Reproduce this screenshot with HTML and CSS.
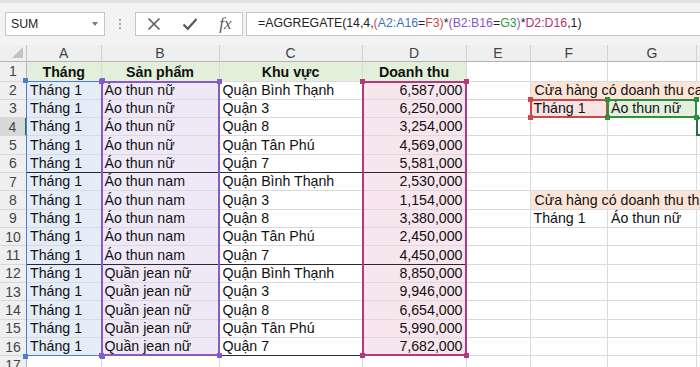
FILE: index.html
```html
<!DOCTYPE html>
<html lang="vi">
  <head>
    <meta charset="UTF-8" />
    <meta name="viewport" content="width=device-width, initial-scale=1.0" />
    <title>AGGREGATE</title>
    <link rel="stylesheet" href="styles.css">
  </head>
  <body>
    <div class="formula-bar">
      <div class="name-box">
        <span>SUM</span>
        <span class="caret"></span>
      </div>
      <div class="grip"><i></i><i></i><i></i></div>
      <div class="edit-btns">
        <span class="btn x-btn">
          <svg width="14" height="14" viewBox="0 0 14 14"><path d="M1.5 1.5 L12.5 12.5 M12.5 1.5 L1.5 12.5" stroke="#5a5a5a" stroke-width="1.6" fill="none"/></svg>
        </span>
        <span class="btn ok-btn">
          <svg width="16" height="14" viewBox="0 0 16 14"><path d="M1.5 7.5 L5.8 11.8 L14.5 2" stroke="#5a5a5a" stroke-width="2.2" fill="none"/></svg>
        </span>
        <span class="btn fx-btn">fx</span>
      </div>
      <div class="formula">=AGGREGATE(14,4,<span class="p1">(</span><span class="ref-a">A2:A16</span>=<span class="ref-f">F3</span><span class="p1">)</span>*<span class="p2">(</span><span class="ref-b">B2:B16</span>=<span class="ref-g">G3</span><span class="p2">)</span>*<span class="ref-d">D2:D16</span>,1)</div>
    </div>

    <div class="sheet">
      <div class="cells">
        <!-- column headers -->
        <div class="corner"><span class="tri"></span></div>
        <div class="ch">A</div><div class="ch">B</div><div class="ch">C</div><div class="ch">D</div>
        <div class="ch">E</div><div class="ch">F</div><div class="ch">G</div><div class="ch"></div>

        <!-- 1 -->
        <div class="rh">1</div>
        <div class="c hd">Tháng</div><div class="c hd">Sản phẩm</div><div class="c hd">Khu vực</div><div class="c hd">Doanh thu</div>
        <div class="c"></div><div class="c"></div><div class="c"></div><div class="c"></div>
        <!-- 2 -->
        <div class="rh">2</div>
        <div class="c fa">Tháng 1</div><div class="c fb">Áo thun nữ</div><div class="c">Quận Bình Thạnh</div><div class="c fd num">6,587,000</div>
        <div class="c"></div><div class="c fo wide">Cửa hàng có doanh thu cao nhất</div>
        <!-- 3 -->
        <div class="rh">3</div>
        <div class="c fa">Tháng 1</div><div class="c fb">Áo thun nữ</div><div class="c">Quận 3</div><div class="c fd num">6,250,000</div>
        <div class="c"></div><div class="c fr">Tháng 1</div><div class="c fg">Áo thun nữ</div><div class="c"></div>
        <!-- 4 -->
        <div class="rh on">4</div>
        <div class="c fa">Tháng 1</div><div class="c fb">Áo thun nữ</div><div class="c">Quận 8</div><div class="c fd num">3,254,000</div>
        <div class="c"></div><div class="c"></div><div class="c"></div><div class="c"></div>
        <!-- 5 -->
        <div class="rh">5</div>
        <div class="c fa">Tháng 1</div><div class="c fb">Áo thun nữ</div><div class="c">Quận Tân Phú</div><div class="c fd num">4,569,000</div>
        <div class="c"></div><div class="c"></div><div class="c"></div><div class="c"></div>
        <!-- 6 -->
        <div class="rh">6</div>
        <div class="c fa sep">Tháng 1</div><div class="c fb sep">Áo thun nữ</div><div class="c sep">Quận 7</div><div class="c fd num sep">5,581,000</div>
        <div class="c"></div><div class="c"></div><div class="c"></div><div class="c"></div>
        <!-- 7 -->
        <div class="rh">7</div>
        <div class="c fa">Tháng 1</div><div class="c fb">Áo thun nam</div><div class="c">Quận Bình Thạnh</div><div class="c fd num">2,530,000</div>
        <div class="c"></div><div class="c"></div><div class="c"></div><div class="c"></div>
        <!-- 8 -->
        <div class="rh">8</div>
        <div class="c fa">Tháng 1</div><div class="c fb">Áo thun nam</div><div class="c">Quận 3</div><div class="c fd num">1,154,000</div>
        <div class="c"></div><div class="c fo wide">Cửa hàng có doanh thu thấp nhất</div>
        <!-- 9 -->
        <div class="rh">9</div>
        <div class="c fa">Tháng 1</div><div class="c fb">Áo thun nam</div><div class="c">Quận 8</div><div class="c fd num">3,380,000</div>
        <div class="c"></div><div class="c">Tháng 1</div><div class="c">Áo thun nữ</div><div class="c"></div>
        <!-- 10 -->
        <div class="rh">10</div>
        <div class="c fa">Tháng 1</div><div class="c fb">Áo thun nam</div><div class="c">Quận Tân Phú</div><div class="c fd num">2,450,000</div>
        <div class="c"></div><div class="c"></div><div class="c"></div><div class="c"></div>
        <!-- 11 -->
        <div class="rh">11</div>
        <div class="c fa sep">Tháng 1</div><div class="c fb sep">Áo thun nam</div><div class="c sep">Quận 7</div><div class="c fd num sep">4,450,000</div>
        <div class="c"></div><div class="c"></div><div class="c"></div><div class="c"></div>
        <!-- 12 -->
        <div class="rh">12</div>
        <div class="c fa">Tháng 1</div><div class="c fb">Quần jean nữ</div><div class="c">Quận Bình Thạnh</div><div class="c fd num">8,850,000</div>
        <div class="c"></div><div class="c"></div><div class="c"></div><div class="c"></div>
        <!-- 13 -->
        <div class="rh">13</div>
        <div class="c fa">Tháng 1</div><div class="c fb">Quần jean nữ</div><div class="c">Quận 3</div><div class="c fd num">9,946,000</div>
        <div class="c"></div><div class="c"></div><div class="c"></div><div class="c"></div>
        <!-- 14 -->
        <div class="rh">14</div>
        <div class="c fa">Tháng 1</div><div class="c fb">Quần jean nữ</div><div class="c">Quận 8</div><div class="c fd num">6,654,000</div>
        <div class="c"></div><div class="c"></div><div class="c"></div><div class="c"></div>
        <!-- 15 -->
        <div class="rh">15</div>
        <div class="c fa">Tháng 1</div><div class="c fb">Quần jean nữ</div><div class="c">Quận Tân Phú</div><div class="c fd num">5,990,000</div>
        <div class="c"></div><div class="c"></div><div class="c"></div><div class="c"></div>
        <!-- 16 -->
        <div class="rh">16</div>
        <div class="c fa sep">Tháng 1</div><div class="c fb sep">Quần jean nữ</div><div class="c sep">Quận 7</div><div class="c fd num sep">7,682,000</div>
        <div class="c"></div><div class="c"></div><div class="c"></div><div class="c"></div>
        <!-- 17 -->
        <div class="rh">17</div>
        <div class="c"></div><div class="c"></div><div class="c"></div><div class="c"></div>
        <div class="c"></div><div class="c"></div><div class="c"></div><div class="c"></div>
      </div>

      <!-- formula reference outlines, drawn over the cells -->
      <div class="marks">
        <div class="range ra"><i class="tl"></i><i class="tr"></i><i class="bl"></i><i class="br"></i></div>
        <div class="range rb"><i class="tl"></i><i class="tr"></i><i class="bl"></i><i class="br"></i></div>
        <div class="range rd"><i class="tl"></i><i class="tr"></i><i class="bl"></i><i class="br"></i></div>
        <div class="range rf"><i class="tl"></i><i class="tr"></i><i class="bl"></i><i class="br"></i></div>
        <div class="range rg"><i class="tl"></i><i class="tr"></i><i class="bl"></i><i class="br"></i></div>
        <div class="active"></div>
      </div>
    </div>
  </body>
</html>
```

FILE: styles.css
```css
body {
  margin: 0;
  width: 700px;
  height: 367px;
  overflow: hidden;
  background: #fff;
  font-family: "Liberation Sans", Arial, sans-serif;
  font-size: 14.2px;
  color: #111;
}

/* formula bar */
.formula-bar {
  height: 45px;
  box-sizing: border-box;
  background: #f3f3f3;
  border-top: 3px solid #e2e2e2;
  padding-top: 9px;
  display: flex;
  align-items: flex-start;
  font-size: 12.3px;
}

.name-box {
  margin-left: 5px;
  width: 100px;
  height: 24px;
  box-sizing: border-box;
  border: 1px solid #c8c8c8;
  background: #fff;
  display: flex;
  align-items: center;
  justify-content: space-between;
  padding: 0 6px 0 5px;
  color: #222;
}

.caret {
  width: 0;
  height: 0;
  border-left: 3.5px solid transparent;
  border-right: 3.5px solid transparent;
  border-top: 4px solid #7a7a7a;
}

.grip {
  width: 30px;
  height: 24px;
  display: flex;
  flex-direction: column;
  align-items: center;
  justify-content: center;
  gap: 2px;
}

.grip i {
  width: 2px;
  height: 2px;
  background: #a8a8a8;
}

.edit-btns {
  width: 108px;
  height: 24px;
  box-sizing: border-box;
  border: 1px solid #c8c8c8;
  background: #fff;
  display: flex;
}

.btn {
  display: flex;
  align-items: center;
  justify-content: center;
}

.x-btn { width: 36px; }
.ok-btn { width: 38px; }

.fx-btn {
  width: 34px;
  font-family: "Liberation Serif", "Times New Roman", serif;
  font-style: italic;
  font-size: 17px;
  color: #5a5a5a;
}

.formula {
  margin-left: 3px;
  flex: 1;
  height: 24px;
  box-sizing: border-box;
  border: 1px solid #c8c8c8;
  border-right: none;
  background: #fff;
  padding-left: 11px;
  line-height: 21px;
  color: #222;
  white-space: nowrap;
}

.p1 { color: #c0504d; }
.p2 { color: #9b4fb5; }
.ref-a { color: #3b6fc6; }
.ref-f { color: #d0454a; }
.ref-b { color: #8a55c6; }
.ref-g { color: #2f9a3f; }
.ref-d { color: #b0307a; }

/* sheet */
.sheet {
  display: grid;
  width: 700px;
  overflow: hidden;
}

.cells,
.marks {
  grid-area: 1 / 1;
  display: grid;
  grid-template-columns: 27px 74.5px 118px 143px 104px 64px 77.5px 88.7px 40px;
  grid-template-rows: 17px 19.5px repeat(16, 18.33px);
}

.marks {
  pointer-events: none;
}

.corner {
  background: #efefef;
  border-right: 1px solid #c4c4c4;
  border-bottom: 1px solid #b4b4b4;
  display: flex;
  align-items: flex-end;
  justify-content: flex-end;
  padding: 0 3px 3px 0;
}

.tri {
  width: 0;
  height: 0;
  border-left: 11px solid transparent;
  border-bottom: 11px solid #c2c2c2;
}

.ch {
  background: #efefef;
  border-right: 1px solid #d2d2d2;
  border-bottom: 1px solid #b4b4b4;
  display: flex;
  align-items: center;
  justify-content: center;
  color: #444;
  line-height: 16px;
  font-size: 14px;
}

.rh {
  background: #efefef;
  border-right: 1px solid #b4b4b4;
  border-bottom: 1px solid #d8d8d8;
  display: flex;
  align-items: center;
  justify-content: center;
  color: #444;
  line-height: 16px;
  font-size: 14px;
}

.rh.on {
  background: #d8d8d8;
  border-right: 2px solid #217346;
}

.cells > div {
  box-sizing: border-box;
  min-width: 0;
}

.c {
  border-right: 1px solid #dadada;
  border-bottom: 1px solid #dadada;
  padding: 0 3px 1px;
  display: flex;
  align-items: flex-end;
  white-space: nowrap;
  line-height: 16px;
  color: #111;
}

.num { justify-content: flex-end; }

.hd {
  background: #e2efda;
  font-weight: bold;
  justify-content: center;
}

.fa { background: #e4ecf7; }
.fb { background: #efe9f7; }
.fd { background: #f7e6ee; }
.fr { background: #f7e3e2; }
.fg { background: #e3f0dd; }
.fo { background: #fce4d6; }

.wide {
  grid-column: span 3;
  padding-left: 4px;
}

.sep { border-bottom-color: #2a2a2a; }

/* reference outlines */
.range {
  position: relative;
  box-sizing: border-box;
  margin: -1px 0 0 -1px;
  border: 2px solid currentColor;
}

.range i {
  position: absolute;
  width: 5px;
  height: 5px;
  background: currentColor;
}

.range .tl { left: -4px; top: -4px; }
.range .tr { right: -4px; top: -4px; }
.range .bl { left: -4px; bottom: -4px; }
.range .br { right: -4px; bottom: -4px; }

.ra { grid-column: 2; grid-row: 3 / 18; color: #4a7ed0; border-width: 1.5px; }
.rb { grid-column: 3; grid-row: 3 / 18; color: #8a58c8; }
.rd { grid-column: 5; grid-row: 3 / 18; color: #b5387f; }
.rf { grid-column: 7; grid-row: 4; color: #c9484b; }
.rg { grid-column: 8; grid-row: 4; color: #2f8f3c; }

.active {
  grid-column: 9;
  grid-row: 5;
  margin: -1px 0 0 -1px;
  border: 2px solid #217346;
}
```
